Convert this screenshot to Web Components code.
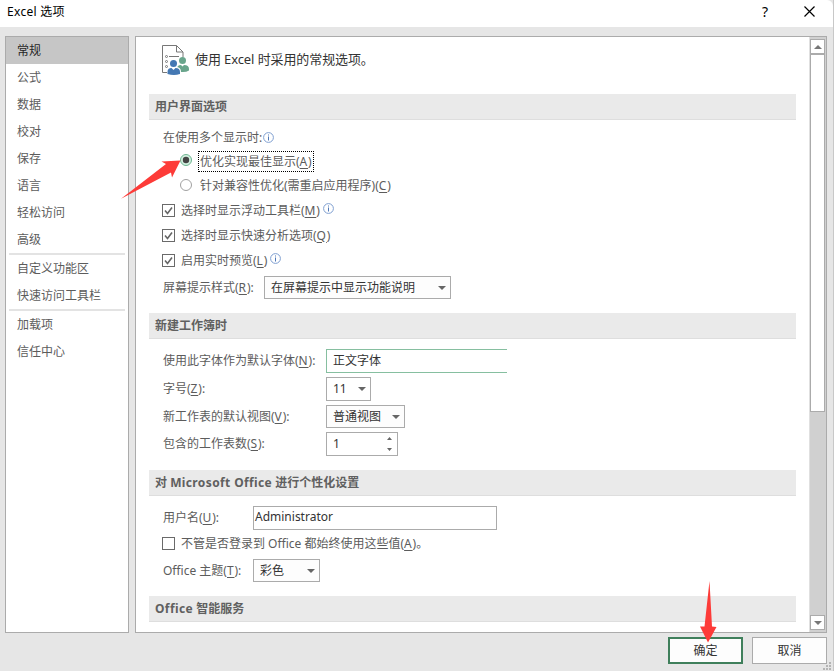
<!DOCTYPE html>
<html lang="zh-CN">
<head>
    <meta charset="UTF-8">
    <meta name="viewport" content="width=device-width, initial-scale=1.0">
    <title>Excel 选项</title>
    <style>
        html, body {
            margin: 0;
            height: 100%;
            overflow: hidden;
        }
        body {
            font: 12px/18px "Noto Sans", "Noto Sans CJK SC", sans-serif;
            color: #5c5c5c;
        }
        u {
            text-underline-offset: 2px;
            text-decoration-thickness: 1px;
            letter-spacing: .8px;
        }
        b {
            font-weight: inherit;
            letter-spacing: .38px;
        }
    </style>
    <script>
    // shadow root を持つ要素の共通クラス
    class BaseElement extends HTMLElement {
        constructor() {
            super();
            this.attachShadow({ mode: 'open' });
            const template = document.createElement('template');
            template.innerHTML = this.constructor.html;
            this.shadowRoot.appendChild(template.content.cloneNode(true));
        }
    }

    // ダイアログ全体
    class OptionsDialog extends BaseElement {
        static html = `
            <style>
                :host {
                    position: relative;
                    display: grid;
                    grid-template-rows: 27px 1fr 38px;
                    box-sizing: border-box;
                    width: 834px;
                    height: 671px;
                    background: #e6e6e6;
                    border-right: 1px solid #c8c8c8;
                }
                header {
                    display: flex;
                    align-items: center;
                    background: #fff;
                    color: #000;
                    padding: 0 18px 4px 7px;
                    border-top-right-radius: 6px;
                }
                h1 {
                    flex: 1;
                    margin: 0;
                    font-size: 12px;
                    font-weight: normal;
                    letter-spacing: .3px;
                }
                .help {
                    font-size: 14px;
                    margin-right: 36px;
                }
                main {
                    display: grid;
                    grid-template-columns: 124px 692px;
                    column-gap: 6px;
                    padding: 9px 0 0 5px;
                }
                footer {
                    display: flex;
                    justify-content: flex-end;
                    gap: 9px;
                    padding: 4px 6px 0 0;
                }
                .grip {
                    position: absolute;
                    right: 1px;
                    bottom: 0;
                }
            </style>
            <header>
                <h1><slot name="title"></slot></h1>
                <span class="help">?</span>
                <svg width="11" height="11" viewBox="0 0 11 11" stroke="#000" stroke-width="1.2"><path d="M.5 .5l10 10M10.500 .5L.5 10.500"/></svg>
            </header>
            <main><slot></slot></main>
            <footer><slot name="buttons"></slot></footer>
            <svg class="grip" width="9" height="9" fill="#b4b4b4"><path d="M6 0h2v2h-2zM3 3h2v2h-2zM6 3h2v2h-2zM0 6h2v2h-2zM3 6h2v2h-2zM6 6h2v2h-2z"/></svg>
            <slot name="overlay"></slot>`;
    }

    class NavList extends BaseElement {
        static html = `
            <style>
                :host {
                    display: block;
                    box-sizing: border-box;
                    height: 597px;
                    background: #fff;
                    border: 1px solid #ababab;
                }
                ::slotted(hr) {
                    margin: 0 3px;
                    border: 0;
                    height: 2px;
                    background: #e3e3e3;
                }
            </style>
            <slot></slot>`;
    }

    class NavItem extends BaseElement {
        static html = `
            <style>
                :host {
                    display: block;
                    height: 27px;
                    line-height: 28px;
                    padding-left: 11px;
                }
                :host([selected]) {
                    background: #c6c6c6;
                    color: #262626;
                }
            </style>
            <slot></slot>`;
    }

    // 右側のページとスクロールバー
    class OptionsPage extends BaseElement {
        static html = `
            <style>
                :host {
                    display: grid;
                    grid-template-columns: 1fr 17px;
                    box-sizing: border-box;
                    height: 597px;
                    background: #fff;
                    border: 1px solid #ababab;
                    overflow: hidden;
                }
                .content {
                    padding: 0 13px;
                }
                .bar {
                    display: flex;
                    flex-direction: column;
                    background: #d0d0d0;
                    padding: 2px 1px;
                    box-shadow: inset 1px 0 #e0e0e0;
                }
                .btn, .thumb {
                    box-sizing: border-box;
                    width: 15px;
                    border: 1px solid #ababab;
                    background: #fff;
                }
                .btn {
                    display: flex;
                    align-items: center;
                    justify-content: center;
                    height: 15px;
                }
                .thumb {
                    height: 358px;
                    margin-bottom: auto;
                }
            </style>
            <div class="content"><slot></slot></div>
            <div class="bar">
                <div class="btn"><svg width="8" height="4" fill="#777"><path d="M0 4l4-4 4 4z"/></svg></div>
                <div class="thumb"></div>
                <div class="btn"><svg width="8" height="4" fill="#777"><path d="M0 0h8l-4 4z"/></svg></div>
            </div>`;
    }

    class PageIntro extends BaseElement {
        static html = `
            <style>
                :host {
                    display: flex;
                    align-items: center;
                    height: 57px;
                    padding-left: 13px;
                    gap: 5px;
                    color: #333;
                    font-size: 13px;
                    letter-spacing: -.1px;
                }
                svg { margin-top: -12px; }
                span { margin-top: -13px; }
            </style>
            <svg width="28" height="32" viewBox="0 0 28 32">
                <path d="M13 28.500H.5V1.500H14.500L21 8V13M14.500 1.500V8H21" fill="none" stroke="#777"/>
                <g fill="none" stroke="#777"><circle cx="4.500" cy="12.500" r="1"/><circle cx="4.500" cy="17.500" r="1"/><circle cx="4.500" cy="22.500" r="1"/><path d="M7 12.500h10"/></g>
                <circle cx="20.500" cy="16.500" r="3.500" fill="#69a58c"/>
                <path d="M15 28v-3q0-4 4-4l1.500 1.500L22 21q5 0 5 4v1.500q-3 2-8 1.500z" fill="#69a58c"/>
                <circle cx="11.500" cy="19.500" r="4.500" fill="#fff"/>
                <path d="M5 31v-3q0-5 5-5h4q5 0 5 5v3z" fill="#fff"/>
                <circle cx="11.500" cy="19.500" r="3.500" fill="#4478b3"/>
                <path d="M5.500 30v-2q0-4 4-4l2 2 2-2q4.500 0 4.500 4v2q-6 2-12.500 0z" fill="#4478b3"/>
            </svg>
            <span><slot></slot></span>`;
    }

    class OptionSection extends BaseElement {
        static html = `
            <style>
                :host { display: block; }
                h2 {
                    box-sizing: border-box;
                    height: 26px;
                    margin: 0;
                    padding-left: 6px;
                    width: 647px;
                    background: #eaeaea;
                    border-bottom: 1px solid #dedede;
                    font-size: 12px;
                    line-height: 25px;
                    color: #606060;
                }
                .rows { padding: var(--rows-padding, 8px 0 12px); }
            </style>
            <h2><slot name="heading"></slot></h2>
            <div class="rows"><slot></slot></div>`;
    }

    class OptionRow extends BaseElement {
        static html = `
            <style>
                :host {
                    display: flex;
                    align-items: center;
                    height: var(--h, 25px);
                    padding-left: 13px;
                    white-space: nowrap;
                }
                :host([indent]) { padding-left: 31px; }
                ::slotted([slot=label]) {
                    width: var(--label, auto);
                    margin-left: 1px;
                    line-height: 20px;
                }
            </style>
            <slot name="label"></slot>
            <slot></slot>`;
    }

    class InfoIcon extends BaseElement {
        static html = `
            <style>
                :host { display: inline-flex; margin: -1px 0 0 1px; }
                :host([raised]) { margin: -4px 0 0 3px; }
            </style>
            <svg width="11" height="11" viewBox="0 0 11 11">
                <circle cx="5.500" cy="5.500" r="4.900" fill="#fff" stroke="#7f9fd0"/>
                <path d="M5 2.500h1v1H5zM5 4.500h1v4H5z" fill="#4f78b8"/>
            </svg>`;
    }

    class RadioOption extends BaseElement {
        static html = `
            <style>
                :host { display: flex; align-items: center; gap: 6px; }
                svg { margin-top: -2px; }
                circle.ring { fill: #fff; stroke: #a0a0a0; }
                circle.dot { display: none; }
                :host([checked]) .ring { fill: #d3f0e0; stroke: #6eb491; }
                :host([checked]) .dot { display: block; }
                span { padding: 0 1px; border: 1px dotted transparent; }
                :host([checked]) span { border-color: #000; line-height: 19px; }
            </style>
            <svg width="12" height="12"><circle class="ring" cx="6" cy="6" r="5.500"/><circle class="dot" cx="6" cy="6" r="3.200" fill="#444"/></svg>
            <span><slot></slot></span>`;
    }

    class CheckOption extends BaseElement {
        static html = `
            <style>
                :host { display: flex; align-items: center; gap: 6px; }
                path { display: none; }
                :host([checked]) path { display: block; }
            </style>
            <svg width="13" height="13" fill="none">
                <rect x=".5" y=".5" width="12" height="12" fill="#fff" stroke="#6a6a6a"/>
                <path d="M3 6.500l2.500 3L10 3.500" stroke="#666" stroke-width="1.600"/>
            </svg>
            <span><slot></slot></span>`;
    }

    // ドロップダウン・テキスト・スピナー兼用の入力枠
    class FieldBox extends BaseElement {
        static html = `
            <style>
                :host {
                    display: flex;
                    align-items: center;
                    justify-content: space-between;
                    box-sizing: border-box;
                    width: var(--w);
                    height: 24px;
                    padding: 0 4px 0 6px;
                    border: 1px solid #ababab;
                    background: #fff;
                    color: #333;
                }
                :host([short]) { height: 23px; background: #fdfdfd; }
                :host([active]) { border-color: #86bfa0; border-right: 0; }
                :host([type=text]) { padding-left: 1px; padding-bottom: 2px; }
                svg { display: none; }
                :host([type=combo]) .down, :host([type=spin]) .spin { display: block; }
            </style>
            <span><slot></slot></span>
            <svg class="down" width="8" height="4" fill="#666"><path d="M0 0h8l-4 4z"/></svg>
            <svg class="spin" width="7" height="14" fill="#666"><path d="M1 3l2.500-3L6 3zM1 11h5l-2.500 3z"/></svg>`;
    }

    class DialogButton extends BaseElement {
        static html = `
            <style>
                :host {
                    display: flex;
                    align-items: center;
                    justify-content: center;
                    box-sizing: border-box;
                    width: 75px;
                    height: 27px;
                    border: 1px solid #ababab;
                    background: #fdfdfd;
                    color: #333;
                }
                :host([primary]) { border: 2px solid #3f7f5b; }
            </style>
            <slot></slot>`;
    }

    // 操作手順を示す赤い矢印
    class GuideArrows extends BaseElement {
        static html = `
            <style>
                :host { position: absolute; inset: 0; pointer-events: none; }
                svg { display: block; }
            </style>
            <svg width="833" height="671" fill="#fd3b38">
                <path d="M121 198.800L166 164 161.500 161.500 180.500 160.500 172 177.500 171 172.500Z"/>
                <path d="M709.500 581L712 626.500 716.500 627 708 642.500 700 626.500 704.500 626.500Z"/>
            </svg>`;
    }

    customElements.define('options-dialog', OptionsDialog);
    customElements.define('nav-list', NavList);
    customElements.define('nav-item', NavItem);
    customElements.define('options-page', OptionsPage);
    customElements.define('page-intro', PageIntro);
    customElements.define('option-section', OptionSection);
    customElements.define('option-row', OptionRow);
    customElements.define('info-icon', InfoIcon);
    customElements.define('radio-option', RadioOption);
    customElements.define('check-option', CheckOption);
    customElements.define('field-box', FieldBox);
    customElements.define('dialog-button', DialogButton);
    customElements.define('guide-arrows', GuideArrows);
    </script>
</head>
<body>
    <options-dialog>
        <span slot="title">Excel 选项</span>
        <nav-list>
            <nav-item selected>常规</nav-item>
            <nav-item>公式</nav-item>
            <nav-item>数据</nav-item>
            <nav-item>校对</nav-item>
            <nav-item>保存</nav-item>
            <nav-item>语言</nav-item>
            <nav-item>轻松访问</nav-item>
            <nav-item>高级</nav-item>
            <hr>
            <nav-item>自定义功能区</nav-item>
            <nav-item>快速访问工具栏</nav-item>
            <hr>
            <nav-item>加载项</nav-item>
            <nav-item>信任中心</nav-item>
        </nav-list>
        <options-page>
            <page-intro>使用 Excel 时采用的常规选项。</page-intro>
            <option-section style="--rows-padding: 7px 0 11px">
                <span slot="heading">用户界面选项</span>
                <option-row style="--h: 22px"><span slot="label">在使用多个显示时:</span><info-icon></info-icon></option-row>
                <option-row indent style="--h: 24px"><radio-option checked>优化实现最佳显示(<u>A</u>)</radio-option></option-row>
                <option-row indent><radio-option>针对兼容性优化(需重启应用程序)(<u>C</u>)</radio-option></option-row>
                <option-row><check-option checked>选择时显示浮动工具栏(<u>M</u>)</check-option><info-icon raised></info-icon></option-row>
                <option-row><check-option checked>选择时显示快速分析选项(<u>Q</u>)</check-option></option-row>
                <option-row><check-option checked>启用实时预览(<u>L</u>)</check-option><info-icon raised></info-icon></option-row>
                <option-row style="--h: 29px; --label: 101px"><span slot="label">屏幕提示样式(<u>R</u>):</span><field-box type="combo" short style="--w: 187px">在屏幕提示中显示功能说明</field-box></option-row>
            </option-section>
            <option-section>
                <span slot="heading">新建工作簿时</span>
                <option-row style="--h: 28px; --label: 163px"><span slot="label">使用此字体作为默认字体(<u>N</u>):</span><field-box active style="--w: 181px">正文字体</field-box></option-row>
                <option-row style="--h: 28px; --label: 163px"><span slot="label">字号(<u>Z</u>):</span><field-box type="combo" style="--w: 45px">11</field-box></option-row>
                <option-row style="--h: 27px; --label: 163px"><span slot="label">新工作表的默认视图(<u>V</u>):</span><field-box type="combo" short style="--w: 79px">普通视图</field-box></option-row>
                <option-row style="--h: 28px; --label: 163px"><span slot="label">包含的工作表数(<u>S</u>):</span><field-box type="spin" style="--w: 72px">1</field-box></option-row>
            </option-section>
            <option-section style="--rows-padding: 8px 0 10px">
                <span slot="heading">对 <b>Microsoft Office</b> 进行个性化设置</span>
                <option-row style="--h: 28px; --label: 90px"><span slot="label">用户名(<u>U</u>):</span><field-box type="text" style="--w: 244px">Administrator</field-box></option-row>
                <option-row style="--h: 23px"><check-option>不管是否登录到 Office 都始终使用这些值(<u>A</u>)。</check-option></option-row>
                <option-row style="--h: 31px; --label: 90px"><span slot="label">Office 主题(<u>T</u>):</span><field-box type="combo" short style="--w: 67px">彩色</field-box></option-row>
            </option-section>
            <option-section style="--rows-padding: 0">
                <span slot="heading"><b>Office</b> 智能服务</span>
            </option-section>
        </options-page>
        <dialog-button slot="buttons" primary>确定</dialog-button>
        <dialog-button slot="buttons">取消</dialog-button>
        <guide-arrows slot="overlay"></guide-arrows>
    </options-dialog>
</body>
</html>
